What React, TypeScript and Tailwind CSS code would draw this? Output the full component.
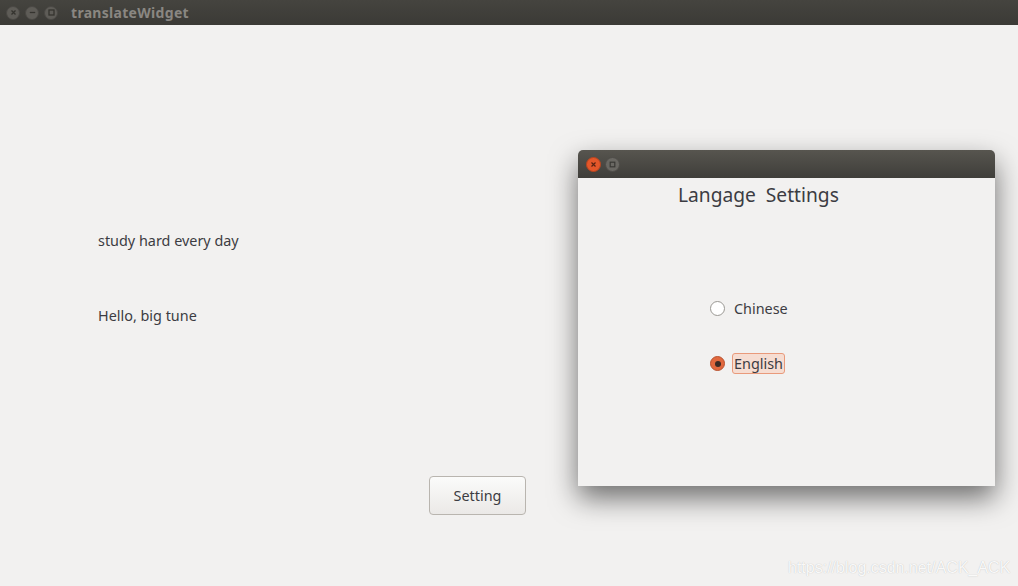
import React from "react";

const font = { fontFamily: '"Noto Sans", "Open Sans", sans-serif' };

function TitleDot({ kind }: { kind: "close" | "min" | "max" }) {
  return (
    <div className="w-[14px] h-[14px] rounded-full bg-[#5e5c57] border border-[#4a4844] flex items-center justify-center">
      <svg width="9" height="9" viewBox="0 0 9 9" fill="none" stroke="#35342f" strokeWidth="1.3">
        {kind === "close" && <path d="M2.5 2.5l4 4M6.5 2.5l-4 4" />}
        {kind === "min" && <path d="M1.8 4.5h5.4" />}
        {kind === "max" && <rect x="2" y="2" width="5" height="5" />}
      </svg>
    </div>
  );
}

function Radio({ checked }: { checked?: boolean }) {
  if (checked)
    return (
      <div className="w-[15px] h-[15px] rounded-full bg-[#e1683e] border border-[#b8522f] flex items-center justify-center">
        <div className="w-[6px] h-[6px] rounded-full bg-[#3a2a25]" />
      </div>
    );
  return <div className="w-[15px] h-[15px] rounded-full bg-white border border-[#9a9893]" />;
}

export default function App() {
  return (
    <div className="relative w-[1018px] h-[586px] bg-[#f2f1f0] overflow-hidden text-[#3c3c42]" style={font}>
      {/* main window title bar */}
      <div className="h-[25px] bg-gradient-to-b from-[#45443f] to-[#3b3a36] flex items-center pl-[6px]">
        <div className="flex gap-[5px]">
          <TitleDot kind="close" />
          <TitleDot kind="min" />
          <TitleDot kind="max" />
        </div>
        <span className="ml-[13px] text-[14px] font-bold text-[#8a8782] tracking-[0.3px]">translateWidget</span>
      </div>

      <div className="pl-[98px] pt-[206px] flex flex-col gap-[56px] text-[14.4px] leading-[19px]">
        <span>study hard every day</span>
        <span>Hello, big tune</span>
      </div>

      <div className="mt-[151px] ml-[429px]">
        <button className="w-[97px] h-[39px] rounded-[4px] border border-[#b9b5af] bg-gradient-to-b from-[#fbfbfa] to-[#ebe9e7] text-[14.4px] text-[#3c3c42]">
          Setting
        </button>
      </div>

      {/* dialog window */}
      <div className="absolute left-[578px] top-[150px] w-[417px] h-[336px] rounded-t-[5px] bg-[#f2f1f0] shadow-[0_12px_28px_rgba(0,0,0,0.55)] flex flex-col">
        <div className="h-[28px] rounded-t-[5px] bg-gradient-to-b from-[#57554f] to-[#3f3e3a] flex items-center pl-[8px] gap-[4px]">
          <div className="w-[15px] h-[15px] rounded-full bg-[#e4572a] border border-[#b8441f] flex items-center justify-center">
            <svg width="9" height="9" viewBox="0 0 9 9" fill="none" stroke="#5a2312" strokeWidth="1.2">
              <path d="M2.5 2.5l4 4M6.5 2.5l-4 4" />
            </svg>
          </div>
          <div className="w-[15px] h-[15px] rounded-full bg-[#6a6863] border border-[#4e4c48] flex items-center justify-center">
            <svg width="9" height="9" viewBox="0 0 9 9" fill="none" stroke="#3a3935" strokeWidth="1.2">
              <rect x="2.2" y="2.2" width="4.6" height="4.6" />
            </svg>
          </div>
        </div>
        <div className="pl-[100px] pt-[4px] text-[19.2px] leading-[25px] whitespace-pre">Langage  Settings</div>
        <div className="pl-[132px] pt-[92px] flex flex-col gap-[35px] text-[14.4px] leading-[19px]">
          <div className="flex items-center gap-[9px]">
            <Radio />
            <span>Chinese</span>
          </div>
          <div className="flex items-center gap-[7px]">
            <Radio checked />
            <span className="px-[1px] rounded-[3px] border border-[#e99a7b] bg-[#f6ddd2]">English</span>
          </div>
        </div>
      </div>

      <div
        className="absolute left-[788px] top-[556px] text-[16px] text-white/90 [text-shadow:0_0_1px_rgba(0,0,0,0.25)]"
        style={{ fontFamily: '"Liberation Sans", Arial, sans-serif' }}
      >
        https://blog.csdn.net/ACK_ACK
      </div>
    </div>
  );
}
